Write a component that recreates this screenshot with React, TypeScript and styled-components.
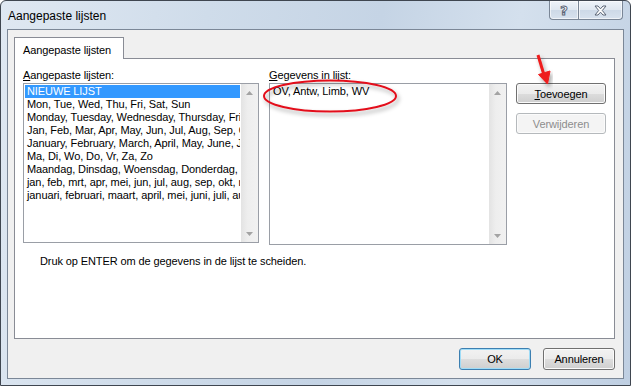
import React from 'react';
import styled, {createGlobalStyle} from 'styled-components';

const GlobalStyle = createGlobalStyle`
  body {
    margin: 0;
    background: #ffffff;
    font-family: 'Liberation Sans', Arial, sans-serif;
  }
`;

const Window = styled.div`
  position: relative;
  box-sizing: border-box;
  width: 631px;
  height: 386px;
  display: flex;
  flex-direction: column;
  padding: 0 6px 6px 6px;
  border: 1px solid #3f4650;
  border-radius: 6px 6px 0 0;
  background: linear-gradient(100deg, #dfe8f2 0%, #cfdcea 30%, #c5d4e5 55%, #d4e0ed 75%, #bfcfe2 100%);
`;

const TitleBar = styled.div`
  height: 28px;
  display: flex;
  align-items: flex-start;
  justify-content: space-between;
`;

const Title = styled.div`
  padding: 8px 0 0 1px;
  font-size: 12px;
  line-height: 14px;
  color: #000;
`;

const CaptionButtons = styled.div`
  display: flex;
  margin-right: 1px;
`;

const CaptionButton = styled.div<{$w: number; $side: 'left' | 'right'}>`
  box-sizing: border-box;
  width: ${({$w}) => $w}px;
  height: 19px;
  display: flex;
  align-items: center;
  justify-content: center;
  border: 1px solid #7a8696;
  border-top: none;
  ${({$side}) => ($side === 'left' ? 'border-right: none;' : '')}
  border-radius: ${({$side}) => ($side === 'left' ? '0 0 0 4px' : '0 0 4px 0')};
  background: linear-gradient(#eef3f9 0%, #dfe7f0 50%, #cdd9e7 51%, #d8e2ee 100%);
  box-shadow: inset 0 0 0 1px rgba(255, 255, 255, 0.6);
  font-family: 'DejaVu Sans', sans-serif;
  font-weight: bold;
  font-size: 13px;
  color: #ffffff;
  -webkit-text-stroke: 1px #5a6576;
`;

const Client = styled.div`
  flex: 1;
  display: flex;
  flex-direction: column;
  padding: 7px 8px 8px 6px;
  border: 1px solid #7b8797;
  background: #f0f0f0;
  font-size: 11px;
  letter-spacing: -0.1px;
  color: #000;
`;

const Tab = styled.div`
  position: relative;
  z-index: 1;
  box-sizing: border-box;
  width: 110px;
  height: 22px;
  margin-bottom: -1px;
  padding: 6px 0 0 8px;
  border: 1px solid #898c95;
  border-bottom: none;
  background: #ffffff;
  line-height: 13px;
`;

const Panel = styled.div`
  box-sizing: border-box;
  height: 281px;
  padding: 9px 8px 0 8px;
  border: 1px solid #898c95;
  background: #ffffff;
`;

const Row = styled.div`
  display: flex;
  align-items: flex-start;
`;

const Column = styled.div<{$w: number; $gap?: number}>`
  width: ${({$w}) => $w}px;
  margin-left: ${({$gap}) => $gap ?? 0}px;
`;

const Label = styled.div`
  height: 14px;
  line-height: 14px;
  margin-bottom: 1px;
`;

const Key = styled.span`
  text-decoration: underline;
`;

const ListBox = styled.div<{$h: number}>`
  box-sizing: border-box;
  height: ${({$h}) => $h}px;
  display: flex;
  border: 1px solid #9a9ea6;
  background: #ffffff;
`;

const Items = styled.div`
  flex: 1;
  min-width: 0;
  padding: 1px;
  overflow: hidden;
`;

const Item = styled.div<{$selected?: boolean}>`
  height: 13px;
  line-height: 13px;
  padding-left: 2px;
  white-space: nowrap;
  overflow: hidden;
  background: ${({$selected}) => ($selected ? '#3399ff' : 'transparent')};
  color: ${({$selected}) => ($selected ? '#ffffff' : '#000000')};
`;

const ScrollBar = styled.div`
  width: 17px;
  display: flex;
  flex-direction: column;
  justify-content: space-between;
  background: linear-gradient(90deg, #e3e3e3, #eeeeee 40%, #f1f1f1);
`;

const ScrollArrow = styled.div`
  height: 17px;
  display: flex;
  align-items: center;
  justify-content: center;
`;

const ButtonColumn = styled.div`
  margin: 15px 0 0 9px;
  display: flex;
  flex-direction: column;
  gap: 9px;
`;

const Button = styled.div<{$w: number; $h: number; $default?: boolean; $disabled?: boolean}>`
  box-sizing: border-box;
  width: ${({$w}) => $w}px;
  height: ${({$h}) => $h}px;
  display: flex;
  align-items: center;
  justify-content: center;
  border-radius: 3px;
  border: 1px solid ${({$default, $disabled}) => ($disabled ? '#b5b9bc' : $default ? '#3c7fb1' : '#707070')};
  background: ${({$disabled}) =>
    $disabled ? '#f4f4f4' : 'linear-gradient(#f2f2f2 0%, #ebebeb 50%, #dddddd 51%, #cfcfcf 100%)'};
  box-shadow: inset 0 0 0 1px ${({$default}) => ($default ? '#9fdcf7' : '#fbfbfb')};
  color: ${({$disabled}) => ($disabled ? '#8d8d8d' : '#000000')};
  font-size: 11px;
`;

const Hint = styled.div`
  margin: 9px 0 0 17px;
  line-height: 14px;
`;

const Footer = styled.div`
  display: flex;
  justify-content: flex-end;
  gap: 12px;
  margin-top: 9px;
`;

const Overlay = styled.svg`
  position: absolute;
  top: -1px;
  left: -1px;
  width: 631px;
  height: 386px;
  pointer-events: none;
`;

const Arrow: React.FC<{readonly up?: boolean}> = ({up}) => (
  <svg width="7" height="4" viewBox="0 0 7 4">
    <polygon points={up ? '0,4 7,4 3.5,0' : '0,0 7,0 3.5,4'} fill="#a3a3a3" />
  </svg>
);

const Scroll: React.FC = () => (
  <ScrollBar>
    <ScrollArrow>
      <Arrow up />
    </ScrollArrow>
    <ScrollArrow>
      <Arrow />
    </ScrollArrow>
  </ScrollBar>
);

const lists = [
  'NIEUWE LIJST',
  'Mon, Tue, Wed, Thu, Fri, Sat, Sun',
  'Monday, Tuesday, Wednesday, Thursday, Friday, Saturday, Sunday',
  'Jan, Feb, Mar, Apr, May, Jun, Jul, Aug, Sep, Oct, Nov, Dec',
  'January, February, March, April, May, June, July, August',
  'Ma, Di, Wo, Do, Vr, Za, Zo',
  'Maandag, Dinsdag, Woensdag, Donderdag, Vrijdag, Zaterdag, Zondag',
  'jan, feb, mrt, apr, mei, jun, jul, aug, sep, okt, nov, dec',
  'januari, februari, maart, april, mei, juni, juli, augustus',
];

export default function App() {
  return (
    <>
      <GlobalStyle />
      <Window>
        <TitleBar>
          <Title>Aangepaste lijsten</Title>
          <CaptionButtons>
            <CaptionButton $w={29} $side="left">?</CaptionButton>
            <CaptionButton $w={45} $side="right">
              <svg width="13" height="11" viewBox="0 0 13 11">
                <path
                  d="M1 1 L4 1 L6.5 3.8 L9 1 L12 1 L8.3 5.5 L12 10 L9 10 L6.5 7.2 L4 10 L1 10 L4.7 5.5 Z"
                  fill="#ffffff"
                  stroke="#5a6576"
                  strokeWidth="1"
                />
              </svg>
            </CaptionButton>
          </CaptionButtons>
        </TitleBar>
        <Client>
          <Tab>Aangepaste lijsten</Tab>
          <Panel>
            <Row>
              <Column $w={236}>
                <Label>
                  <Key>A</Key>angepaste lijsten:
                </Label>
                <ListBox $h={160}>
                  <Items>
                    {lists.map((l, i) => (
                      <Item key={l} $selected={i === 0}>
                        {l}
                      </Item>
                    ))}
                  </Items>
                  <Scroll />
                </ListBox>
              </Column>
              <Column $w={238} $gap={10}>
                <Label>
                  <Key>G</Key>egevens in lijst:
                </Label>
                <ListBox $h={162}>
                  <Items>
                    <Item>OV, Antw, Limb, WV</Item>
                  </Items>
                  <Scroll />
                </ListBox>
              </Column>
              <ButtonColumn>
                <Button $w={90} $h={21}>
                  <span>
                    <Key>T</Key>oevoegen
                  </span>
                </Button>
                <Button $w={90} $h={21} $disabled>
                  Verwijderen
                </Button>
              </ButtonColumn>
            </Row>
            <Hint>Druk op ENTER om de gegevens in de lijst te scheiden.</Hint>
          </Panel>
          <Footer>
            <Button $w={72} $h={22} $default>
              OK
            </Button>
            <Button $w={72} $h={22}>
              Annuleren
            </Button>
          </Footer>
        </Client>
        <Overlay viewBox="0 0 631 386">
          <defs>
            <filter id="shade" x="-20%" y="-20%" width="140%" height="160%">
              <feDropShadow dx="2" dy="3" stdDeviation="2" floodColor="#000" floodOpacity="0.35" />
            </filter>
          </defs>
          <ellipse cx="330" cy="96" rx="66" ry="15.5" fill="none" stroke="#e3101a" strokeWidth="2" filter="url(#shade)" />
          <g filter="url(#shade)" fill="#ee1b1b" stroke="#ee1b1b">
            <line x1="538" y1="55" x2="544" y2="75" strokeWidth="3" />
            <polygon points="547.5,84 538.5,74.5 550,71" strokeWidth="1" />
          </g>
        </Overlay>
      </Window>
    </>
  );
}
